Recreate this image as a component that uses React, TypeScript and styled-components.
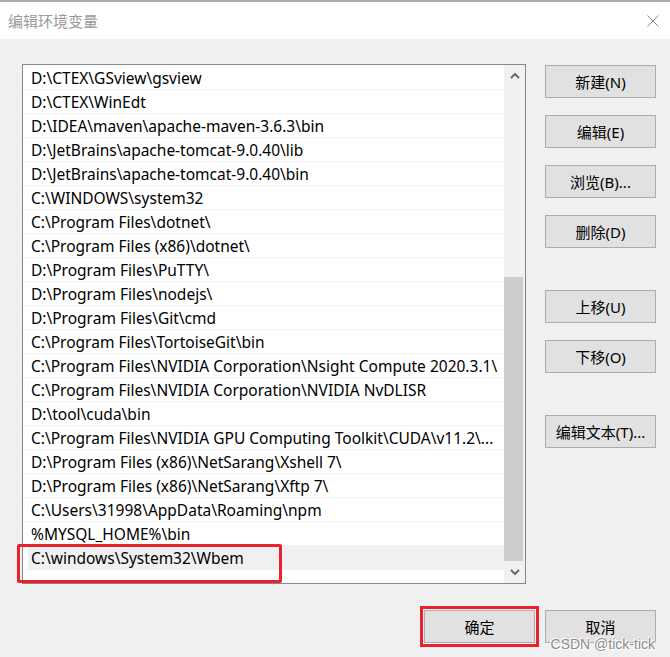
import React from "react";
import styled, { createGlobalStyle } from "styled-components";

const GlobalStyle = createGlobalStyle`
  html, body {
    margin: 0;
    padding: 0;
    background: #f0f0f0;
  }
  body {
    font-family: "Noto Sans", "Noto Sans CJK SC", sans-serif;
  }
`;

const Window = styled.div`
  position: relative;
  width: 670px;
  height: 657px;
  display: flex;
  flex-direction: column;
  background: #f0f0f0;
  overflow: hidden;
`;

const TitleBar = styled.div`
  height: 39px;
  box-sizing: border-box;
  border-top: 2px solid #aaaaaa;
  background: #ffffff;
  display: flex;
  align-items: center;
  justify-content: space-between;
  padding: 0 11px 0 8px;
`;

const Title = styled.div`
  font-family: "Noto Sans CJK SC", sans-serif;
  font-size: 15px;
  color: #999999;
`;

const CloseIcon = styled.svg`
  width: 12px;
  height: 12px;
  display: block;
`;

const Body = styled.div`
  flex: 1;
  display: flex;
  flex-direction: column;
  padding: 25px 14px 0 22px;
`;

const MainRow = styled.div`
  display: flex;
  align-items: flex-start;
  gap: 19px;
`;

const ListBox = styled.div`
  width: 504px;
  height: 520px;
  box-sizing: border-box;
  border: 1px solid #828790;
  background: #ffffff;
  display: flex;
`;

const ListItems = styled.div`
  flex: 1;
  min-width: 0;
  padding-top: 1px;
`;

const Row = styled.div`
  position: relative;
  height: 24px;
  box-sizing: border-box;
  border-bottom: 1px solid #f0f0f0;
  padding-left: 5px;
  display: flex;
`;

const RowInner = styled.div<{ $selected?: boolean }>`
  flex: 1;
  display: flex;
  align-items: center;
  padding-left: 3px;
  background: ${(p) => (p.$selected ? "#f0f0f0" : "transparent")};
  font-size: 15.5px;
  color: #000000;
  white-space: nowrap;
  overflow: hidden;
`;

const RedMark = styled.div`
  position: absolute;
  left: -6px;
  top: -2px;
  width: 265px;
  height: 39px;
  box-sizing: border-box;
  border: 3px solid #e8232d;
  border-radius: 2px;
  pointer-events: none;
`;

const ScrollBar = styled.div`
  width: 21px;
  background: #f0f0f0;
  display: flex;
  flex-direction: column;
`;

const ScrollArrow = styled.div`
  height: 21px;
  display: flex;
  align-items: center;
  justify-content: center;
`;

const ScrollTrack = styled.div`
  flex: 1;
  display: flex;
  flex-direction: column;
`;

const Thumb = styled.div<{ $offset: number; $size: number }>`
  margin-top: ${(p) => p.$offset}px;
  height: ${(p) => p.$size}px;
  width: 19px;
  background: #cdcdcd;
`;

const ButtonColumn = styled.div`
  width: 111px;
  padding-top: 1px;
  display: flex;
  flex-direction: column;
  gap: 17px;
`;

const DialogButton = styled.button<{ $gapBefore?: number; $marked?: boolean }>`
  width: 111px;
  height: 33px;
  margin: ${(p) => (p.$gapBefore ? `${p.$gapBefore}px 0 0 0` : "0")};
  padding: 0;
  box-sizing: border-box;
  border: 1px solid #adadad;
  background: #e1e1e1;
  font-family: "Noto Sans", "Noto Sans CJK SC", sans-serif;
  font-size: 15px;
  color: #000000;
  outline: ${(p) => (p.$marked ? "3px solid #e8232d" : "none")};
  outline-offset: 1px;
`;

const Footer = styled.div`
  display: flex;
  justify-content: flex-end;
  gap: 10px;
  margin-top: 26px;
`;

const Watermark = styled.div`
  position: absolute;
  right: 15px;
  bottom: 5px;
  font-family: "Liberation Sans", sans-serif;
  font-size: 14px;
  color: #8a8a8a;
  text-shadow: 0 0 1px #ffffff, 0 0 2px #ffffff, 1px 1px 0 #ffffff, -1px -1px 0 #ffffff;
  pointer-events: none;
`;

const paths = [
  "D:\\CTEX\\GSview\\gsview",
  "D:\\CTEX\\WinEdt",
  "D:\\IDEA\\maven\\apache-maven-3.6.3\\bin",
  "D:\\JetBrains\\apache-tomcat-9.0.40\\lib",
  "D:\\JetBrains\\apache-tomcat-9.0.40\\bin",
  "C:\\WINDOWS\\system32",
  "C:\\Program Files\\dotnet\\",
  "C:\\Program Files (x86)\\dotnet\\",
  "D:\\Program Files\\PuTTY\\",
  "D:\\Program Files\\nodejs\\",
  "D:\\Program Files\\Git\\cmd",
  "C:\\Program Files\\TortoiseGit\\bin",
  "C:\\Program Files\\NVIDIA Corporation\\Nsight Compute 2020.3.1\\",
  "C:\\Program Files\\NVIDIA Corporation\\NVIDIA NvDLISR",
  "D:\\tool\\cuda\\bin",
  "C:\\Program Files\\NVIDIA GPU Computing Toolkit\\CUDA\\v11.2\\...",
  "D:\\Program Files (x86)\\NetSarang\\Xshell 7\\",
  "D:\\Program Files (x86)\\NetSarang\\Xftp 7\\",
  "C:\\Users\\31998\\AppData\\Roaming\\npm",
  "%MYSQL_HOME%\\bin",
  "C:\\windows\\System32\\Wbem",
];

const sideButtons: { label: string; gap?: number }[] = [
  { label: "新建(N)" },
  { label: "编辑(E)" },
  { label: "浏览(B)..." },
  { label: "删除(D)" },
  { label: "上移(U)", gap: 25 },
  { label: "下移(O)" },
  { label: "编辑文本(T)...", gap: 25 },
];

const Chevron = ({ up }: { up?: boolean }) => (
  <svg width="10" height="7" viewBox="0 0 10 7">
    <path
      d={up ? "M1 6 L5 2 L9 6" : "M1 1 L5 5 L9 1"}
      fill="none"
      stroke="#606060"
      strokeWidth="1.8"
    />
  </svg>
);

export default function App() {
  const selected = paths.length - 1;
  return (
    <>
      <GlobalStyle />
      <Window>
        <TitleBar>
          <Title>编辑环境变量</Title>
          <CloseIcon viewBox="0 0 12 12">
            <path d="M0.5 0.5 L11.5 11.5 M11.5 0.5 L0.5 11.5" stroke="#8a8a8a" strokeWidth="1" fill="none" />
          </CloseIcon>
        </TitleBar>
        <Body>
          <MainRow>
            <ListBox>
              <ListItems>
                {paths.map((p, i) => (
                  <Row key={i}>
                    <RowInner $selected={i === selected}>{p}</RowInner>
                    {i === selected && <RedMark />}
                  </Row>
                ))}
              </ListItems>
              <ScrollBar>
                <ScrollArrow>
                  <Chevron up />
                </ScrollArrow>
                <ScrollTrack>
                  <Thumb $offset={191} $size={284} />
                </ScrollTrack>
                <ScrollArrow>
                  <Chevron />
                </ScrollArrow>
              </ScrollBar>
            </ListBox>
            <ButtonColumn>
              {sideButtons.map((b) => (
                <DialogButton key={b.label} $gapBefore={b.gap}>
                  {b.label}
                </DialogButton>
              ))}
            </ButtonColumn>
          </MainRow>
          <Footer>
            <DialogButton $marked>确定</DialogButton>
            <DialogButton>取消</DialogButton>
          </Footer>
        </Body>
        <Watermark>CSDN @tick-tick</Watermark>
      </Window>
    </>
  );
}
